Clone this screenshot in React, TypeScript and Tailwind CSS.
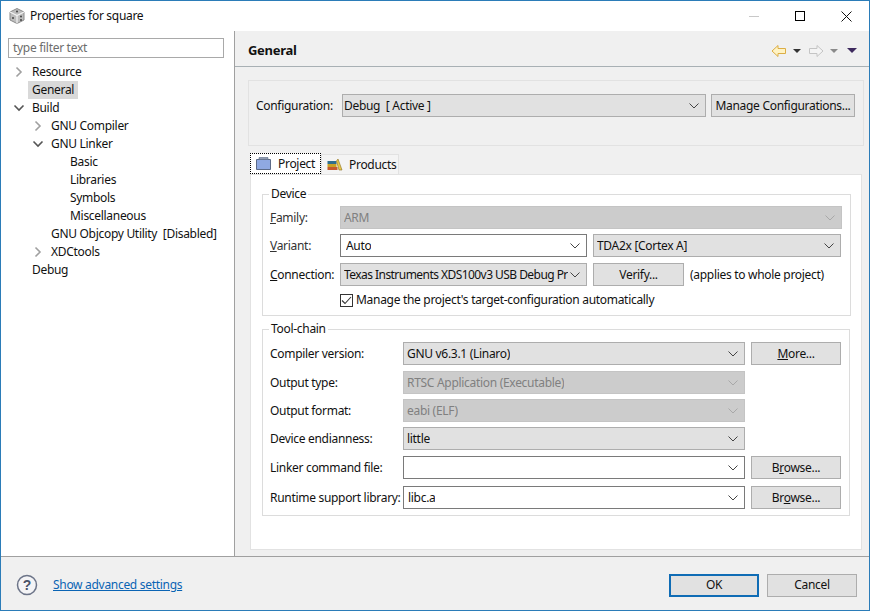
import React from "react";

const Chev = ({ c = "#444" }: { c?: string }) => (
  <svg width="10" height="6" viewBox="0 0 10 6" className="shrink-0">
    <path d="M0.5 0.5 L5 5 L9.5 0.5" fill="none" stroke={c} strokeWidth="1" />
  </svg>
);

const Combo = ({ text, w, kind = "ro", cl = "", tcl = "" }: { text: string; w: string; kind?: "ro" | "dis" | "edit"; cl?: string; tcl?: string }) => {
  const box =
    kind === "ro"
      ? "bg-[#e1e1e1] border-[#adadad] text-[#111] pl-[3px]"
      : kind === "dis"
      ? "bg-[#cccccc] border-[#c4c4c4] text-[#808080] pl-[3px]"
      : "bg-white border-[#7a7a7a] text-[#111] pl-[4px]";
  return (
    <div className={`${w} ${box} ${cl} h-[23px] border flex items-center justify-between pr-[4px] shrink-0`}>
      <span className={`whitespace-pre overflow-hidden ${tcl}`}>{text}</span>
      <span className="w-[14px] flex justify-center shrink-0"><Chev c={kind === "dis" ? "#a8a8a8" : "#444"} /></span>
    </div>
  );
};

const Btn = ({ children, w, cl = "" }: { children: React.ReactNode; w: string; cl?: string }) => (
  <div className={`${w} ${cl} h-[23px] bg-[#e1e1e1] border border-[#adadad] flex items-center justify-center shrink-0 text-[#111]`}>{children}</div>
);

const TreeRow = ({ indent, arrow, text, sel }: { indent: string; arrow?: "r" | "d"; text: string; sel?: boolean }) => (
  <div className={`h-[18px] flex items-center ${indent}`}>
    <span className="w-[18px] flex justify-center shrink-0">
      {arrow === "r" && (
        <svg width="8" height="12" viewBox="0 0 8 12"><path d="M1.5 1.5 L6 6 L1.5 10.5" fill="none" stroke="#a0a0a0" strokeWidth="1.6" /></svg>
      )}
      {arrow === "d" && (
        <svg width="12" height="8" viewBox="0 0 12 8"><path d="M1.5 1.5 L6 6 L10.5 1.5" fill="none" stroke="#555" strokeWidth="1.6" /></svg>
      )}
    </span>
    <span className={`whitespace-pre leading-[18px] px-[4px] ${sel ? "bg-[#d9d9d9]" : ""}`}>{text}</span>
  </div>
);

const Row = ({ label, children, cl = "" }: { label: React.ReactNode; children: React.ReactNode; cl?: string }) => (
  <div className={`flex items-center ${cl}`}>
    <span className="w-[133px] shrink-0 whitespace-nowrap text-[#111]">{label}</span>
    {children}
  </div>
);

export default function App() {
  return (
    <div
      className="w-[870px] h-[611px] bg-[#f0f0f0] border border-[#2b7cb8] flex flex-col overflow-hidden text-[12px] text-[#111]"
      style={{ fontFamily: '"Noto Sans", "Open Sans", sans-serif', letterSpacing: "-0.3px" }}
    >
      {/* title bar */}
      <div className="h-[30px] bg-white flex items-center shrink-0 relative">
        <svg width="18" height="18" viewBox="0 0 18 18" className="ml-[7px]">
          <path d="M9 1.5 L16 5 V13 L9 16.5 L2 13 V5 Z" fill="#bdbdbd" stroke="#8a8a8a" />
          <path d="M2 5 L9 8.5 L16 5 M9 8.5 V16.5" fill="none" stroke="#f2f2f2" strokeWidth="1.2" />
          <circle cx="9" cy="4.5" r="1" fill="#444" /><circle cx="5" cy="11" r="1" fill="#444" /><circle cx="13" cy="9.5" r="1" fill="#444" /><circle cx="13" cy="13" r="1" fill="#444" />
        </svg>
        <span className="ml-[4px]">Properties for square</span>
        <div className="ml-auto flex items-center">
          <span className="w-[46px] h-[30px] flex items-center justify-center">
            <span className="w-[10px] h-[1px] bg-[#c8c8c8]" />
          </span>
          <span className="w-[46px] h-[30px] flex items-center justify-center">
            <span className="w-[10px] h-[10px] border border-black" />
          </span>
          <span className="w-[46px] h-[30px] flex items-center justify-center">
            <svg width="11" height="11" viewBox="0 0 11 11"><path d="M0.5 0.5 L10.5 10.5 M10.5 0.5 L0.5 10.5" stroke="#111" /></svg>
          </span>
        </div>
      </div>

      <div className="flex h-[526px] shrink-0 border-b border-[#a0a0a0]">
        {/* tree */}
        <div className="w-[234px] bg-white shrink-0 pt-[7px] pl-[7px] border-r border-[#a0a0a0]">
          <div className="w-[216px] h-[20px] border border-[#a9a9a9] flex items-center pl-[4px] text-[#6d6d6d]">type filter text</div>
          <div className="mt-[5px]">
            <TreeRow indent="pl-[2px]" arrow="r" text="Resource" />
            <TreeRow indent="pl-[2px]" text="General" sel />
            <TreeRow indent="pl-[2px]" arrow="d" text="Build" />
            <TreeRow indent="pl-[21px]" arrow="r" text="GNU Compiler" />
            <TreeRow indent="pl-[21px]" arrow="d" text="GNU Linker" />
            <TreeRow indent="pl-[40px]" text="Basic" />
            <TreeRow indent="pl-[40px]" text="Libraries" />
            <TreeRow indent="pl-[40px]" text="Symbols" />
            <TreeRow indent="pl-[40px]" text="Miscellaneous" />
            <TreeRow indent="pl-[21px]" text="GNU Objcopy Utility  [Disabled]" />
            <TreeRow indent="pl-[21px]" arrow="r" text="XDCtools" />
            <TreeRow indent="pl-[2px]" text="Debug" />
          </div>
        </div>

        {/* right pane */}
        <div className="flex-1 flex flex-col min-w-0">
          <div className="h-[36px] shrink-0 flex items-center border-b border-[#a8b0b4] pl-[13px] pr-[12px] pt-[4px]">
            <span className="font-bold text-[13px]">General</span>
            <div className="ml-auto flex items-center">
              <svg width="16" height="14" viewBox="0 0 16 14"><path d="M7 1.5 L1 7 L7 12.5 V9.5 H14.5 V4.5 H7 Z" fill="#fff3c4" stroke="#dcae45" /></svg>
              <svg width="8" height="4" viewBox="0 0 8 4" className="ml-[6px]"><path d="M0 0 H8 L4 4 Z" fill="#333" /></svg>
              <svg width="16" height="14" viewBox="0 0 16 14" className="ml-[7px]"><path d="M9 1.5 L15 7 L9 12.5 V9.5 H1.5 V4.5 H9 Z" fill="#f4f4f4" stroke="#c4c4c4" /></svg>
              <svg width="8" height="4" viewBox="0 0 8 4" className="ml-[6px]"><path d="M0 0 H8 L4 4 Z" fill="#8a8a8a" /></svg>
              <svg width="10" height="5" viewBox="0 0 10 5" className="ml-[9px]"><path d="M0 0 H10 L5 5 Z" fill="#3e2a5e" /></svg>
            </div>
          </div>

          <div className="flex-1 pl-[13px] pr-[5px] pt-[13px]">
            <div className="w-[616px] h-[66px] border border-[#e2e2e2] flex items-start pt-[13px] pl-[7px]">
              <span className="w-[86px] shrink-0 leading-[23px]">Configuration:</span>
              <Combo text="Debug  [ Active ]" w="w-[364px]" cl="pl-[1px]" tcl="-ml-[2px]" />
              <Btn w="w-[144px]" cl="ml-[5px]">Manage Configurations...</Btn>
            </div>

            {/* tabs */}
            <div className="flex items-end h-[29px] pl-[2px]">
              <div className="h-[21px] w-[71px] bg-white border border-dotted border-black flex items-center pl-[5px] gap-[7px] relative z-10 mb-[1px]">
                <svg width="15" height="13" viewBox="0 0 15 13"><path d="M0.5 2.5 H14.5 V12.5 H0.5 Z" fill="#8fa9e2" stroke="#5c6b88" /><path d="M3 0.5 H12 V2.5 H3 Z" fill="#8f9bb0" stroke="#5c6b88" strokeWidth="0.6" /></svg>
                <span>Project</span>
              </div>
              <div className="h-[20px] w-[78px] bg-[#f4f4f4] border border-[#e2e2e2] border-b-0 flex items-center pl-[5px] gap-[6px] mb-[1px]">
                <svg width="16" height="13" viewBox="0 0 16 13"><rect x="0.5" y="3" width="9" height="3" fill="#2f6f8f" /><rect x="0.5" y="6" width="9" height="3" fill="#c9a227" /><rect x="0.5" y="9" width="10" height="3" fill="#c65a2e" /><path d="M11 1 L15 12 H12 L9.5 3 Z" fill="#e9c94a" stroke="#8a6d1e" strokeWidth="0.6" /></svg>
                <span>Products</span>
              </div>
            </div>

            <div className="w-[612px] h-[376px] ml-[2px] -mt-px bg-white border border-[#e2e2e2] pl-[11px] pt-[13px]">
              <fieldset className="w-[588px] h-[128px] border border-[#dcdcdc] pl-[7px] pr-[8px]">
                <legend className="-ml-[1px] px-[2px] leading-[12px] h-[12px] text-[#111]">Device</legend>
                <div className="flex items-center mt-[6px]">
                  <span className="w-[70px] shrink-0 text-[#333]"><u>F</u>amily:</span>
                  <Combo text="ARM" w="w-[502px]" kind="dis" />
                </div>
                <div className="flex items-center mt-[5px]">
                  <span className="w-[70px] shrink-0 text-[#333]"><u>V</u>ariant:</span>
                  <Combo text="Auto" w="w-[247px]" kind="edit" tcl="ml-[1px]" />
                  <Combo text="TDA2x [Cortex A]" w="w-[248px]" cl="ml-[6px]" />
                </div>
                <div className="flex items-center mt-[6px]">
                  <span className="w-[70px] shrink-0 text-[#111]"><u>C</u>onnection:</span>
                  <Combo text="Texas Instruments XDS100v3 USB Debug Pr" w="w-[247px]" tcl="tracking-[-0.55px]" />
                  <Btn w="w-[91px]" cl="ml-[6px]">Verify...</Btn>
                  <span className="ml-[6px] whitespace-nowrap">(applies to whole project)</span>
                </div>
                <div className="flex items-center mt-[6px] ml-[70px] h-[16px]">
                  <span className="w-[13px] h-[13px] border border-[#333] bg-white flex items-center justify-center shrink-0">
                    <svg width="11" height="9" viewBox="0 0 11 9"><path d="M1 4.5 L4 7.5 L10 1" fill="none" stroke="#333" strokeWidth="1.1" /></svg>
                  </span>
                  <span className="ml-[3px] whitespace-nowrap">Manage the project's target-configuration automatically</span>
                </div>
              </fieldset>

              <fieldset className="w-[588px] h-[193px] mt-[7px] border border-[#dcdcdc] pl-[7px] pr-[8px]">
                <legend className="-ml-[1px] px-[2px] leading-[12px] h-[12px]">Tool-chain</legend>
                <Row cl="mt-[7px]" label="Compiler version:">
                  <Combo text="GNU v6.3.1 (Linaro)" w="w-[342px]" />
                  <Btn w="w-[90px]" cl="ml-[6px]"><span><u>M</u>ore...</span></Btn>
                </Row>
                <Row cl="mt-[6px]" label="Output type:">
                  <Combo text="RTSC Application (Executable)" w="w-[342px]" kind="dis" />
                </Row>
                <Row cl="mt-[5px]" label="Output format:">
                  <Combo text="eabi (ELF)" w="w-[342px]" kind="dis" />
                </Row>
                <Row cl="mt-[5px]" label="Device endianness:">
                  <Combo text="little" w="w-[342px]" />
                </Row>
                <Row cl="mt-[6px]" label="Linker command file:">
                  <Combo text="" w="w-[342px]" kind="edit" />
                  <Btn w="w-[90px]" cl="ml-[6px]"><span>B<u>r</u>owse...</span></Btn>
                </Row>
                <Row cl="mt-[7px]" label="Runtime support library:">
                  <Combo text="libc.a" w="w-[342px]" kind="edit" />
                  <Btn w="w-[90px]" cl="ml-[6px]"><span>Br<u>o</u>wse...</span></Btn>
                </Row>
              </fieldset>
            </div>
          </div>
        </div>
      </div>

      {/* bottom */}
      <div className="flex-1 flex items-center pl-[15px] pr-[12px] pt-[3px]">
        <svg width="22" height="22" viewBox="0 0 22 22">
          <circle cx="11" cy="11" r="9.5" fill="#f4f4f6" stroke="#6c7488" strokeWidth="1.5" />
          <text x="11" y="16" textAnchor="middle" fontSize="14" fontWeight="700" fill="#4a5268" fontFamily="Liberation Sans">?</text>
        </svg>
        <span className="ml-[15px] text-[#0a64b4] underline">Show advanced settings</span>
        <div className="ml-auto h-[23px] w-[90px] bg-[#e1e1e1] border-2 border-[#0f6cb5] flex items-center justify-center">OK</div>
        <div className="ml-[8px] h-[23px] w-[90px] bg-[#e1e1e1] border border-[#adadad] flex items-center justify-center">Cancel</div>
      </div>
    </div>
  );
}
